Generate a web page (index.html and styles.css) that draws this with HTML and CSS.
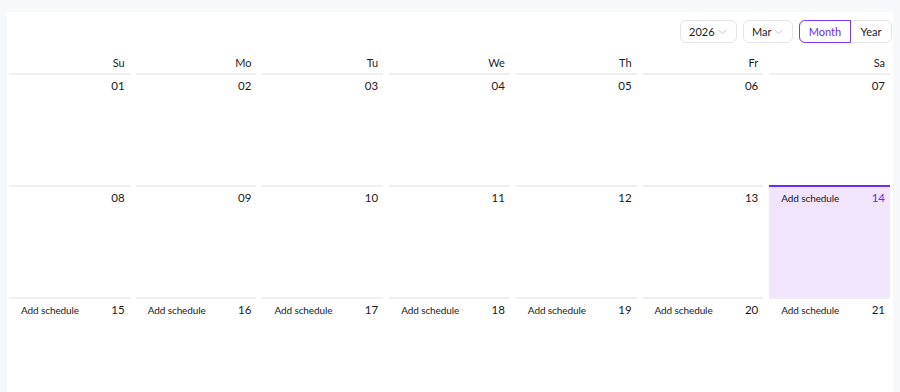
FILE: index.html
```html
<!DOCTYPE html>
<html>
<head>
<meta charset="utf-8">
<link rel="stylesheet" href="styles.css">
</head>
<body>
<div class="card">
  <div class="toolbar">
    <div class="select">2026 <svg class="chev" viewBox="0 0 10 6" width="9" height="6"><path d="M1 1l4 4 4-4" fill="none" stroke="#bcbcc4" stroke-width="1"/></svg></div>
    <div class="select">Mar <svg class="chev" viewBox="0 0 10 6" width="9" height="6"><path d="M1 1l4 4 4-4" fill="none" stroke="#bcbcc4" stroke-width="1"/></svg></div>
    <div class="seg">
      <div class="seg-btn active">Month</div>
      <div class="seg-btn">Year</div>
    </div>
  </div>
  <div class="grid">
    <div class="wd">Su</div><div class="wd">Mo</div><div class="wd">Tu</div><div class="wd">We</div><div class="wd">Th</div><div class="wd">Fr</div><div class="wd">Sa</div>

    <div class="day"><span class="num">01</span></div>
    <div class="day"><span class="num">02</span></div>
    <div class="day"><span class="num">03</span></div>
    <div class="day"><span class="num">04</span></div>
    <div class="day"><span class="num">05</span></div>
    <div class="day"><span class="num">06</span></div>
    <div class="day"><span class="num">07</span></div>

    <div class="day"><span class="num">08</span></div>
    <div class="day"><span class="num">09</span></div>
    <div class="day"><span class="num">10</span></div>
    <div class="day"><span class="num">11</span></div>
    <div class="day"><span class="num">12</span></div>
    <div class="day"><span class="num">13</span></div>
    <div class="day today"><span class="add">Add schedule</span><span class="num">14</span></div>

    <div class="day"><span class="add">Add schedule</span><span class="num">15</span></div>
    <div class="day"><span class="add">Add schedule</span><span class="num">16</span></div>
    <div class="day"><span class="add">Add schedule</span><span class="num">17</span></div>
    <div class="day"><span class="add">Add schedule</span><span class="num">18</span></div>
    <div class="day"><span class="add">Add schedule</span><span class="num">19</span></div>
    <div class="day"><span class="add">Add schedule</span><span class="num">20</span></div>
    <div class="day"><span class="add">Add schedule</span><span class="num">21</span></div>

    <div class="day"><span class="add">Add schedule</span><span class="num">22</span></div>
    <div class="day"><span class="add">Add schedule</span><span class="num">23</span></div>
    <div class="day"><span class="add">Add schedule</span><span class="num">24</span></div>
    <div class="day"><span class="add">Add schedule</span><span class="num">25</span></div>
    <div class="day"><span class="add">Add schedule</span><span class="num">26</span></div>
    <div class="day"><span class="add">Add schedule</span><span class="num">27</span></div>
    <div class="day"><span class="add">Add schedule</span><span class="num">28</span></div>

    <div class="day"><span class="add">Add schedule</span><span class="num">29</span></div>
    <div class="day"><span class="add">Add schedule</span><span class="num">30</span></div>
    <div class="day"><span class="add">Add schedule</span><span class="num">31</span></div>
    <div class="day"></div>
    <div class="day"></div>
    <div class="day"></div>
    <div class="day"></div>
  </div>
</div>
</body>
</html>
```

FILE: styles.css
```css
* { box-sizing: border-box; }
body {
  margin: 0;
  background: #f6f8fc;
  font-family: "Lato", "Noto Sans", sans-serif;
  color: #1a1a1a;
}
.card {
  margin: 12px 7px 0 7px;
  background: #ffffff;
  padding: 8px 3px 0 2px;
}
.toolbar {
  display: flex;
  justify-content: flex-end;
  align-items: center;
  gap: 6px;
  margin-right: -2px;
  height: 23px;
}
.select {
  height: 23px;
  border: 1px solid #e4e4e8;
  border-radius: 6px;
  display: flex;
  align-items: center;
  padding: 0 9px 0 8px;
  font-size: 11px;
  color: #1a1a1a;
}
.select:first-child { width: 57px; }
.select:nth-child(2) { width: 50px; }
.chev { display: block; margin-left: auto; }
.seg {
  display: flex;
  height: 23px;
  border: 1px solid #e4e4e8;
  border-radius: 6px;
  width: 93px;
}
.seg-btn {
  display: flex;
  align-items: center;
  justify-content: center;
  font-size: 11px;
  color: #1a1a1a;
  flex: 1;
}
.seg-btn.active {
  flex: 0 0 52px;
  margin: -1px 0 -1px -1px;
  border: 1px solid #7a3cf0;
  border-radius: 6px 0 0 6px;
  color: #6a2cf0;
}
.grid {
  display: grid;
  grid-template-columns: repeat(7, 1fr);
  column-gap: 6px;
}
.wd {
  text-align: right;
  font-size: 11px;
  padding: 13px 5px 0 0;
  height: 30px;
  color: #1f1f1f;
}
.day {
  border-top: 2px solid #efeff1;
  height: 112px;
  display: flex;
  justify-content: space-between;
  align-items: flex-start;
  padding: 4px 5px 0 12px;
  font-size: 11.5px;
}
.num { margin-left: auto; }
.add { font-size: 10px; letter-spacing: -0.1px; padding-top: 1px; }
.day.today {
  background: #f0e5fc;
  border-top-color: #6a2cf0;
}
.day.today .num { color: #6a2cf0; }
```
